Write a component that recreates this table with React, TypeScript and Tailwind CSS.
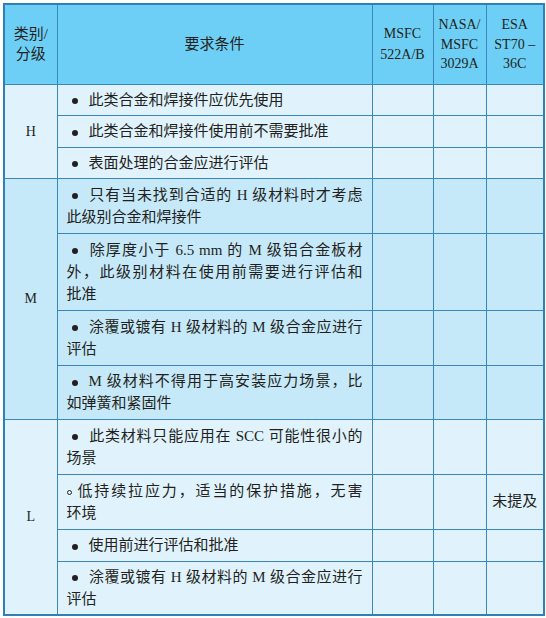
import React from "react";

type Item = { mark: "dot" | "circle"; lines: string[]; h: number; note?: string };
type Section = { label: string; bg: string; items: Item[] };

const sections: Section[] = [
  {
    label: "H",
    bg: "bg-[#e0f3fc]",
    items: [
      { mark: "dot", lines: ["此类合金和焊接件应优先使用"], h: 31 },
      { mark: "dot", lines: ["此类合金和焊接件使用前不需要批准"], h: 32 },
      { mark: "dot", lines: ["表面处理的合金应进行评估"], h: 31 },
    ],
  },
  {
    label: "M",
    bg: "bg-[#c6e9f9]",
    items: [
      { mark: "dot", lines: ["只有当未找到合适的 H 级材料时才考虑", "此级别合金和焊接件"], h: 55 },
      {
        mark: "dot",
        lines: ["除厚度小于 6.5 mm 的 M 级铝合金板材", "外，此级别材料在使用前需要进行评估和", "批准"],
        h: 77,
      },
      { mark: "dot", lines: ["涂覆或镀有 H 级材料的 M 级合金应进行", "评估"], h: 55 },
      { mark: "dot", lines: ["M 级材料不得用于高安装应力场景，比", "如弹簧和紧固件"], h: 54 },
    ],
  },
  {
    label: "L",
    bg: "bg-[#e0f3fc]",
    items: [
      { mark: "dot", lines: ["此类材料只能应用在 SCC 可能性很小的", "场景"], h: 55 },
      { mark: "circle", lines: ["低持续拉应力，适当的保护措施，无害", "环境"], h: 55, note: "未提及" },
      { mark: "dot", lines: ["使用前进行评估和批准"], h: 32 },
      { mark: "dot", lines: ["涂覆或镀有 H 级材料的 M 级合金应进行", "评估"], h: 54 },
    ],
  },
];

const cell = "border border-[#3a86be] p-0";

function Requirement({ item }: { item: Item }) {
  return (
    <div className="px-[9px] text-left text-[15px] leading-[22px]">
      {item.lines.map((line, i) => (
        <div
          key={i}
          className={i < item.lines.length - 1 ? "whitespace-nowrap [text-align-last:justify]" : "whitespace-nowrap"}
        >
          {i === 0 &&
            (item.mark === "dot" ? (
              <span className="inline-block w-[22px] align-middle">
                <span className="ml-[5px] block h-[6px] w-[6px] rounded-full bg-[#231f20]" />
              </span>
            ) : (
              <span className="inline-block w-[9px] align-middle">
                <span className="block h-[5px] w-[5px] rounded-full border border-[#231f20]" />
              </span>
            ))}
          {line}
        </div>
      ))}
    </div>
  );
}

export default function App() {
  return (
    <div className="min-h-[618px] bg-white p-[3px] font-['Liberation_Serif','Noto_Sans_CJK_SC',serif] text-[#231f20]">
      <table className="w-[542px] table-fixed border-collapse border-2 border-[#2f7fb8]">
        <colgroup>
          <col className="w-[53px]" />
          <col className="w-[315px]" />
          <col className="w-[61px]" />
          <col className="w-[53px]" />
          <col className="w-[58px]" />
        </colgroup>
        <thead>
          <tr className="h-[80px] bg-[#6dcff6] text-center">
            <th className={`${cell} text-[15px] font-normal leading-[20px]`}>
              类别/
              <br />
              分级
            </th>
            <th className={`${cell} text-[15px] font-normal`}>要求条件</th>
            <th className={`${cell} text-[14px] font-normal leading-[21px]`}>
              MSFC
              <br />
              522A/B
            </th>
            <th className={`${cell} text-[14px] font-normal leading-[19.5px]`}>
              NASA/
              <br />
              MSFC
              <br />
              3029A
            </th>
            <th className={`${cell} text-[14px] font-normal leading-[19.5px]`}>
              ESA
              <br />
              ST70 –
              <br />
              36C
            </th>
          </tr>
        </thead>
        <tbody>
          {sections.map((s) =>
            s.items.map((item, i) => (
              <tr key={`${s.label}-${i}`} className={s.bg} style={{ height: item.h }}>
                {i === 0 && (
                  <td rowSpan={s.items.length} className={`${cell} text-center text-[14px]`}>
                    {s.label}
                  </td>
                )}
                <td className={cell}>
                  <Requirement item={item} />
                </td>
                <td className={cell} />
                <td className={cell} />
                <td className={`${cell} text-center text-[15px]`}>{item.note}</td>
              </tr>
            )),
          )}
        </tbody>
      </table>
    </div>
  );
}
